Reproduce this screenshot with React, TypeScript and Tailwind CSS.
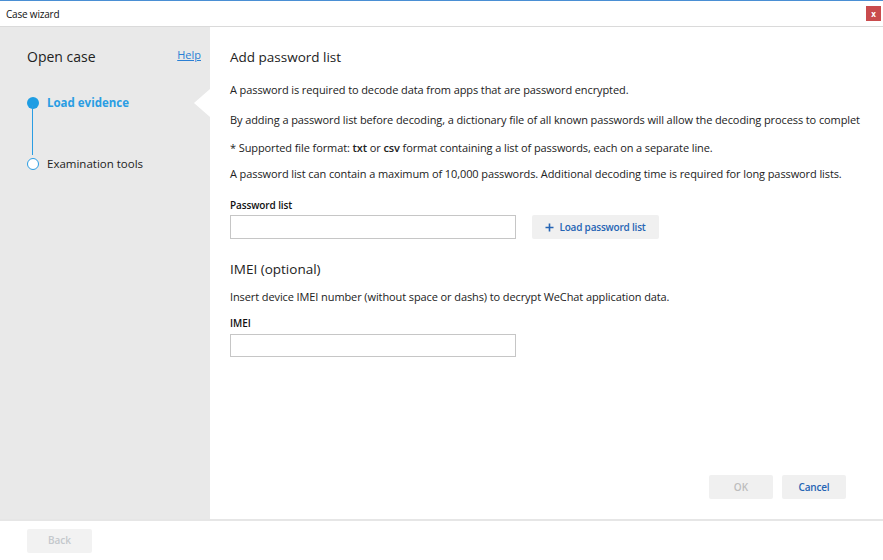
import React from "react";

const font = { fontFamily: '"Open Sans", "Noto Sans", sans-serif' };

export default function App() {
  return (
    <div
      className="w-[883px] h-[560px] bg-white flex flex-col border-t border-[#4a8fd4] text-[#222] overflow-hidden"
      style={font}
    >
      {/* Title bar */}
      <div className="h-[26px] flex items-center justify-between pl-[6px] pr-[2px] border-b border-[#dadada]">
        <span className="text-[10px] tracking-[-0.2px] leading-none text-[#111]">Case wizard</span>
        <div className="w-[15px] h-[15px] bg-[#c94b4d] flex items-center justify-center text-white text-[8px] font-bold leading-none">
          x
        </div>
      </div>

      {/* Middle */}
      <div className="flex flex-1 min-h-0">
        {/* Sidebar */}
        <div className="w-[210px] bg-[#e9e9e9] relative flex flex-col">
          <div className="flex items-start justify-between pl-[27px] pr-[9px] pt-[20px]">
            <span className="text-[14px] leading-[20px] text-[#222]">Open case</span>
            <span className="text-[11px] leading-[16px] text-[#2a7fd4] underline">Help</span>
          </div>
          <div className="relative pl-[27px] mt-[26px]">
            <div className="absolute left-[32px] top-[12px] w-[1px] h-[50px] bg-[#2a9de3]" />
            <div className="flex items-center h-[20px]">
              <div className="w-[12px] h-[12px] rounded-full bg-[#1e9de3]" />
              <span className="ml-[8px] text-[11.5px] font-bold text-[#2a9de3]">Load evidence</span>
            </div>
            <div className="flex items-center h-[20px] mt-[41px]">
              <div className="w-[12px] h-[12px] rounded-full border border-[#2a9de3] bg-white" />
              <span className="ml-[8px] text-[11.5px] text-[#222]">Examination tools</span>
            </div>
          </div>
          {/* pointer */}
          <div className="absolute right-0 top-[62px] w-0 h-0 border-y-[14px] border-y-transparent border-r-[16px] border-r-white" />
        </div>

        {/* Main */}
        <div className="flex-1 min-w-0 flex flex-col pl-[20px] pr-[20px] overflow-hidden">
          <div className="text-[13.5px] leading-[22px] pt-[19px] text-[#222]">Add password list</div>
          <p className="text-[11px] tracking-[-0.1px] leading-[20px] mt-[12px] whitespace-nowrap">
            A password is required to decode data from apps that are password encrypted.
          </p>
          <p className="text-[11px] tracking-[-0.1px] leading-[20px] mt-[10px] whitespace-nowrap overflow-hidden">
            By adding a password list before decoding, a dictionary file of all known passwords will allow the decoding process to complet
          </p>
          <p className="text-[11px] tracking-[-0.1px] leading-[20px] mt-[8px] whitespace-nowrap">
            * Supported file format: <b className="font-semibold">txt</b> or <b className="font-semibold">csv</b> format containing a list of passwords, each on a separate line.
          </p>
          <p className="text-[11px] tracking-[-0.1px] leading-[20px] mt-[6px] whitespace-nowrap">
            A password list can contain a maximum of 10,000 passwords. Additional decoding time is required for long password lists.
          </p>

          <div className="text-[10px] tracking-[-0.1px] leading-[16px] font-semibold mt-[13px] text-[#111]">Password list</div>
          <div className="flex items-center mt-[2px]">
            <div className="w-[286px] h-[24px] border border-[#c6c6c6] bg-white" />
            <div className="ml-[16px] w-[127px] h-[24px] bg-[#f0f0f0] rounded-[2px] flex items-center justify-center gap-[5px] text-[10px] tracking-[-0.2px] font-semibold text-[#2564b4]">
              <svg width="9" height="9" viewBox="0 0 9 9">
                <path d="M4.5 0.5v8M0.5 4.5h8" stroke="#2564b4" strokeWidth="1.6" />
              </svg>
              <span>Load password list</span>
            </div>
          </div>

          <div className="text-[13.5px] leading-[22px] mt-[19px] text-[#222]">IMEI (optional)</div>
          <p className="text-[11px] tracking-[-0.1px] leading-[20px] mt-[7px] whitespace-nowrap">
            Insert device IMEI number (without space or dashs) to decrypt WeChat application data.
          </p>
          <div className="text-[10px] leading-[16px] font-semibold mt-[8px] text-[#111]">IMEI</div>
          <div className="w-[286px] h-[23px] border border-[#c6c6c6] bg-white mt-[3px]" />

          <div className="flex-1" />
          <div className="flex justify-end gap-[9px] pr-[17px] mb-[20px]">
            <div className="w-[64px] h-[24px] bg-[#f0f0f0] rounded-[2px] flex items-center justify-center text-[10px] font-semibold text-[#bdbdbd]">
              OK
            </div>
            <div className="w-[64px] h-[24px] bg-[#f0f0f0] rounded-[2px] flex items-center justify-center text-[10px] tracking-[-0.2px] font-semibold text-[#2564b4]">
              Cancel
            </div>
          </div>
        </div>
      </div>

      {/* Bottom */}
      <div className="h-[41px] border-t-2 border-[#e6e6e6] flex items-center pl-[27px]">
        <div className="w-[65px] h-[24px] bg-[#f2f2f2] rounded-[2px] flex items-center justify-center text-[10px] font-semibold text-[#c4c8cc]">
          Back
        </div>
      </div>
    </div>
  );
}
